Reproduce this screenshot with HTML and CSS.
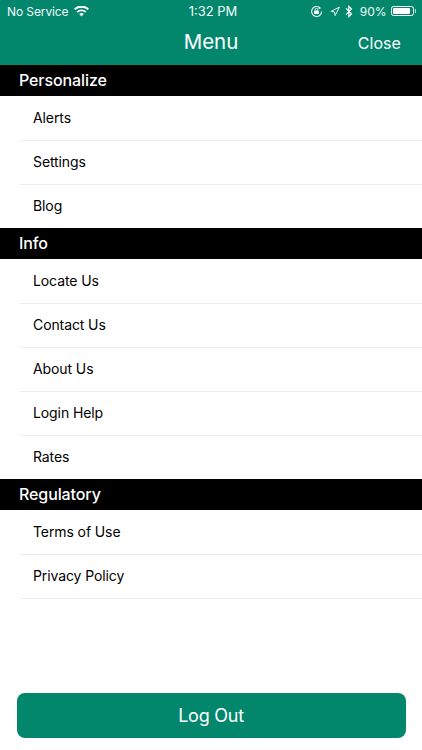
FILE: index.html
```html
<!DOCTYPE html>
<html lang="en">
<head>
<meta charset="utf-8">
<title>Menu</title>
<link rel="stylesheet" href="styles.css">
</head>
<body>
<div class="app">
  <header class="header">
    <div class="status">
      <div class="status-left">
        <span>No Service</span>
        <svg class="wifi" width="15" height="11" viewBox="0 0 15 11"><path d="M7.5 10.6 5.2 8.1a3.3 3.3 0 0 1 4.6 0zM3.9 6.8 2.6 5.4a7 7 0 0 1 9.8 0l-1.3 1.4a5.2 5.2 0 0 0-7.2 0zM1.4 4.1 0 2.7a10.7 10.7 0 0 1 15 0l-1.4 1.4a8.8 8.8 0 0 0-12.2 0z" fill="#fff"/></svg>
      </div>
      <div class="status-time">1:32 PM</div>
      <div class="status-right">
        <svg width="13" height="13" viewBox="0 0 13 13"><path d="M11.6 6.5a5 5 0 1 1-1.5-3.6" fill="none" stroke="#fff" stroke-width="1.1"/><path d="M9 1.4l2 1.9-2.4.9z" fill="#fff"/><rect x="4.2" y="5.6" width="4.6" height="3.4" rx=".5" fill="#fff"/><path d="M5.2 5.6V4.7a1.3 1.3 0 0 1 2.6 0v.9" fill="none" stroke="#fff" stroke-width=".9"/></svg>
        <svg class="gap-loc" width="10" height="11" viewBox="0 0 11 11"><path d="M10.3.7 5.6 10 5 6 1 5.4z" fill="none" stroke="#fff" stroke-width="1" stroke-linejoin="round"/></svg>
        <svg class="gap-bt" width="8" height="13" viewBox="0 0 8 13"><path d="M1 3.4 6.5 8.9 3.8 11.6V1.4L6.5 4.1 1 9.6" fill="none" stroke="#fff" stroke-width="1.2"/></svg>
        <span class="battery-pct">90%</span>
        <span class="battery"><span class="battery-level"></span></span>
        <span class="battery-cap"></span>
      </div>
    </div>
    <div class="nav">
      <h1 class="nav-title">Menu</h1>
      <span class="nav-close">Close</span>
    </div>
  </header>
  <main class="menu">
    <h2 class="section">Personalize</h2>
    <ul class="list">
      <li class="item">Alerts</li>
      <li class="item">Settings</li>
      <li class="item plain">Blog</li>
    </ul>
    <h2 class="section">Info</h2>
    <ul class="list">
      <li class="item">Locate Us</li>
      <li class="item">Contact Us</li>
      <li class="item">About Us</li>
      <li class="item">Login Help</li>
      <li class="item plain">Rates</li>
    </ul>
    <h2 class="section">Regulatory</h2>
    <ul class="list">
      <li class="item">Terms of Use</li>
      <li class="item">Privacy Policy</li>
    </ul>
  </main>
  <div class="footer">
    <button class="logout">Log Out</button>
  </div>
</div>
</body>
</html>
```
FILE: styles.css
```css
* { box-sizing: border-box; }
html, body { margin: 0; padding: 0; }
body { background: #fff; font-family: Inter, "Liberation Sans", sans-serif; color: #000; }
.app { width: 422px; height: 750px; display: flex; flex-direction: column; overflow: hidden; }
.header { height: 65px; background: #02876d; color: #fff; flex: none; }
.status { height: 22px; display: grid; grid-template-columns: 1fr auto 1fr; align-items: center; padding: 0 6px 0 7px; font-size: 12px; color: #f2faf8; }
.status-left { display: flex; align-items: center; gap: 5px; letter-spacing: -.1px; }
.status-time { font-size: 13px; font-weight: 400; padding-left: 3px; }
.status-right { display: flex; align-items: center; justify-content: flex-end; }
.gap-loc { margin-left: 7px; }
.gap-bt { margin-left: 5px; }
.battery-pct { margin-left: 7px; font-size: 12px; }
.battery { margin-left: 4px; width: 23px; height: 10px; border: 1px solid #fff; border-radius: 2.5px; padding: 1px; display: block; }
.battery-level { display: block; width: 90%; height: 100%; background: #fff; border-radius: 1px; }
.battery-cap { width: 1.5px; height: 4px; background: #fff; opacity: .7; margin-left: 1px; }
.nav { height: 43px; display: flex; align-items: center; justify-content: center; position: relative; }
.nav-title { margin: 0; font-size: 20.5px; font-weight: 400; line-height: 1; position: relative; top: -1.5px; }
.nav-close { position: absolute; right: 21px; top: 11px; font-size: 16px; line-height: 20px; letter-spacing: .05px; }
.menu { flex: 1; }
.section { margin: 0; height: 31px; background: #000; color: #fff; font-size: 16px; font-weight: 500; line-height: 31px; padding-left: 19px; letter-spacing: -.1px; }
.list { list-style: none; margin: 0; padding: 0 0 0 20px; }
.item { height: 44px; line-height: 44px; padding-left: 13px; font-size: 14px; letter-spacing: -.1px; box-shadow: 0 1px 0 #ececec; }
.item.plain { box-shadow: none; }
.footer { flex: none; padding: 0 16.5px 12.5px; }
.logout { display: block; width: 100%; height: 45px; border: none; border-radius: 8px; background: #02876d; color: #fff; font-family: inherit; font-size: 18px; letter-spacing: -.25px; padding: 0; }
```
